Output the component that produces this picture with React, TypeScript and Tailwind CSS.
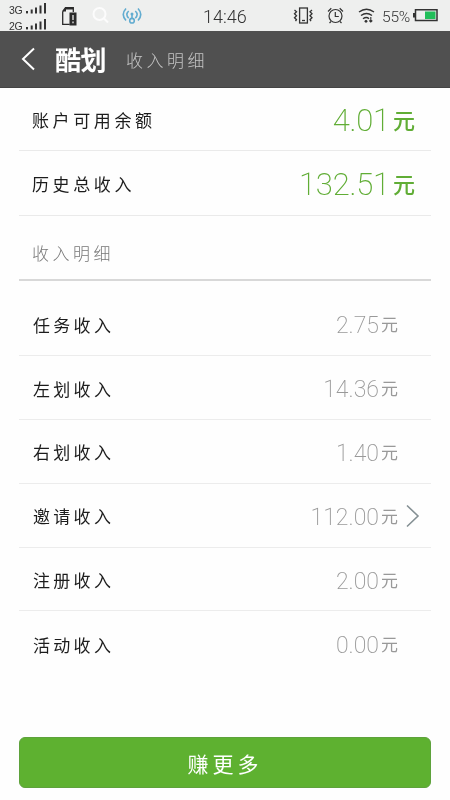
import React from 'react';

const latin = "font-['Roboto','Noto_Sans_CJK_SC',sans-serif]";
const cjk = "font-['Noto_Sans_CJK_SC',sans-serif]";

function Signal({ label }: { label: string }) {
  return (
    <div className="flex h-[15px] items-center gap-[4px]">
      <span className="w-[13px] text-[10.5px] leading-[15px] tracking-[-0.3px] font-['Liberation_Sans',sans-serif]">{label}</span>
      <svg className="mb-[4px]" width="21" height="11" viewBox="0 0 21 11" fill="#333">
        <rect x="0" y="8" width="2" height="2.4" />
        <rect x="4.7" y="6.5" width="2" height="4" />
        <rect x="9" y="4.5" width="2" height="6" />
        <rect x="13.5" y="2.5" width="2" height="8" />
        <rect x="18" y="0" width="2" height="10.5" />
      </svg>
    </div>
  );
}

function StatusBar() {
  return (
    <div className="flex h-[31px] items-start bg-[#eeefee] pl-[9px] text-[#333]">
      <div className="flex w-[38px] flex-col gap-[1px] pt-[3px]">
        <Signal label="3G" />
        <Signal label="2G" />
      </div>
      <svg className="ml-[14px] mt-[6px]" width="18" height="21" viewBox="0 0 18 21">
        <path d="M1.7 5.5 4.5 1.700h7.800V6M1.700 5.500v12.800h7" fill="none" stroke="#2b2b2b" strokeWidth="1.300" />
        <path d="M1.700 5.500 4.500 1.700h7.800V3.500H5v2z" fill="#2b2b2b" />
        <rect x="8.500" y="6.500" width="7" height="13" fill="#2b2b2b" />
        <path d="M12 9v5M12 15.500v1.700" stroke="#eee" strokeWidth="1.300" />
      </svg>
      <svg className="ml-[13px] mt-[6px]" width="20" height="20" viewBox="0 0 20 20" fill="none" stroke="#fcfcfc" strokeWidth="2">
        <circle cx="7.500" cy="8" r="6" />
        <path d="m12 12.500 4 4" />
      </svg>
      <svg className="ml-[10px] mt-[7px]" width="20" height="18" viewBox="0 0 20 18" fill="none" stroke="#62acd0" strokeWidth="1.600">
        <path d="M4 1.500Q-1.500 7.500 4 13.500M16 1.500Q21.500 7.500 16 13.500M6.700 4Q3 7.500 6.700 11.200M13.300 4Q17 7.500 13.300 11.200" />
        <circle cx="10" cy="7" r="1.500" fill="#62acd0" stroke="none" />
        <path d="M10 7v5" />
        <circle cx="10" cy="13.700" r="2.300" />
      </svg>
      <span className={`ml-[61px] w-[46px] text-[18px] font-light leading-[33px] ${latin}`}>14:46</span>
      <svg className="ml-[44px] mt-[7px]" width="21" height="17" viewBox="0 0 21 17" fill="none" stroke="#333" strokeWidth="1.300">
        <rect x="6.600" y="1" width="7.800" height="15" />
        <path d="M9 13.500h3" />
        <path d="m1.500 3 2 1.700-2 2 2 2-2 2 2 2-1 1.500M19 3l-2 1.700 2 2-2 2 2 2-2 2 1 1.500" />
      </svg>
      <svg className="ml-[13px] mt-[7px]" width="17" height="18" viewBox="0 0 17 18" fill="none" stroke="#333" strokeWidth="1.200">
        <circle cx="8.500" cy="9" r="6.500" />
        <path d="M8.300 5v4.500h3.500M1 4.500 4.300 1.300M16 4.500l-3.300-3.200M4 14.500 2.500 16M13 14.500l1.500 1.500" />
      </svg>
      <svg className="ml-[14px] mt-[8px]" width="17" height="16" viewBox="0 0 17 16" fill="none" stroke="#333" strokeWidth="1.400">
        <path d="M1 4Q8.500-1.500 16 4M3 7.500q5.500-4 11 0M5 10.800q3.500-2.500 6 0" />
        <circle cx="8" cy="13.300" r="1.400" fill="#333" stroke="none" />
        <path d="M12.800 9v5M11.300 12.500l1.500 1.500 1.500-1.500" strokeWidth="1.100" />
      </svg>
      <span className={`ml-[7px] w-[30px] text-[15.500px] font-light leading-[34px] tracking-[-0.200px] ${latin}`}>55%</span>
      <svg className="ml-[1px] mt-[8px]" width="26" height="14" viewBox="0 0 26 14">
        <path d="M2.500 1.800h21.500v10.700H2.500z" fill="none" stroke="#333" strokeWidth="1.500" />
        <rect x="0" y="5" width="2.500" height="4.500" fill="#333" />
        <rect x="12" y="3.500" width="10.500" height="7.500" fill="#22be5a" />
      </svg>
    </div>
  );
}

function Header() {
  return (
    <header className="flex h-[57px] items-center border-b border-[#444] bg-[#505050] text-white">
      <svg className="ml-[21px]" width="14" height="24" viewBox="0 0 14 24" fill="none" stroke="#fff" strokeWidth="2">
        <path d="M13 1.500 2 12l11 10.500" />
      </svg>
      <h1 className={`ml-[20px] w-[52px] whitespace-nowrap text-[26px] font-bold leading-[56px] tracking-[-0.500px] ${cjk}`}>酷划</h1>
      <span className={`ml-[19px] pt-[2px] text-[17px] font-light leading-[56px] tracking-[3.500px] text-[#c4c4c4] ${cjk}`}>收入明细</span>
    </header>
  );
}

function TotalRow({ label, value, size }: { label: string; value: string; size: string }) {
  return (
    <div className={`flex items-center justify-between border-b border-[#eaeaea] pl-[13px] pr-[16px] ${size}`}>
      <span className={`pt-[2px] text-[17px] font-normal tracking-[3.600px] text-[#1c1c1c] ${cjk}`}>{label}</span>
      <span className="flex items-center text-[#60ad35]">
        <span className={`pt-[3px] text-[31px] font-extralight leading-[40px] tracking-[-0.200px] ${latin}`}>{value}</span>
        <span className={`ml-[3px] text-[22px] font-medium leading-[38px] ${cjk}`}>元</span>
      </span>
    </div>
  );
}

function DetailRow({ label, value, link, last }: { label: string; value: string; link?: boolean; last?: boolean }) {
  return (
    <div className={`flex h-[63.900px] items-center pl-[14px] ${last ? '' : 'border-b border-[#ececec]'}`}>
      <span className={`pt-[2px] text-[17px] font-normal tracking-[3.300px] text-[#1c1c1c] ${cjk}`}>{label}</span>
      <span className="ml-auto flex items-center text-[#999]">
        <span className={`pt-[5px] text-[23px] font-extralight leading-[32px] ${latin}`}>{value}</span>
        <span className={`ml-[2px] pt-[2px] text-[17px] font-normal leading-[32px] ${cjk}`}>元</span>
      </span>
      <span className="flex w-[33px] pl-[8px] pt-[2px]">
        {link && (
          <svg width="14" height="24" viewBox="0 0 14 24" fill="none" stroke="#859094" strokeWidth="1.600">
            <path d="M1 1.500 12 12 1 22.500" />
          </svg>
        )}
      </span>
    </div>
  );
}

const details = [
  { label: '任务收入', value: '2.75' },
  { label: '左划收入', value: '14.36' },
  { label: '右划收入', value: '1.40' },
  { label: '邀请收入', value: '112.00', link: true },
  { label: '注册收入', value: '2.00' },
  { label: '活动收入', value: '0.00' },
];

export default function App() {
  return (
    <div className="flex h-[800px] w-[450px] flex-col overflow-hidden bg-[#fefefe] antialiased will-change-transform">
      <StatusBar />
      <Header />
      <main className="flex flex-1 flex-col px-[19px]">
        <TotalRow label="账户可用余额" value="4.01" size="h-[63px]" />
        <TotalRow label="历史总收入" value="132.51" size="h-[65px]" />
        <h2 className={`flex h-[65px] items-center border-b-2 border-[#d8d8d8] pl-[13px] pt-[11px] text-[17px] font-light tracking-[3.500px] text-[#777] ${cjk}`}>收入明细</h2>
        <div className="mt-[11px]">
          {details.map((d, i) => (
            <DetailRow key={d.label} {...d} last={i === details.length - 1} />
          ))}
        </div>
        <button className={`mb-[12px] mt-auto h-[51px] rounded-[6px] border border-[#5ea23c] bg-[#5eb130] text-[21px] font-normal leading-[48px] tracking-[4px] text-white ${cjk}`}>赚更多</button>
      </main>
    </div>
  );
}
